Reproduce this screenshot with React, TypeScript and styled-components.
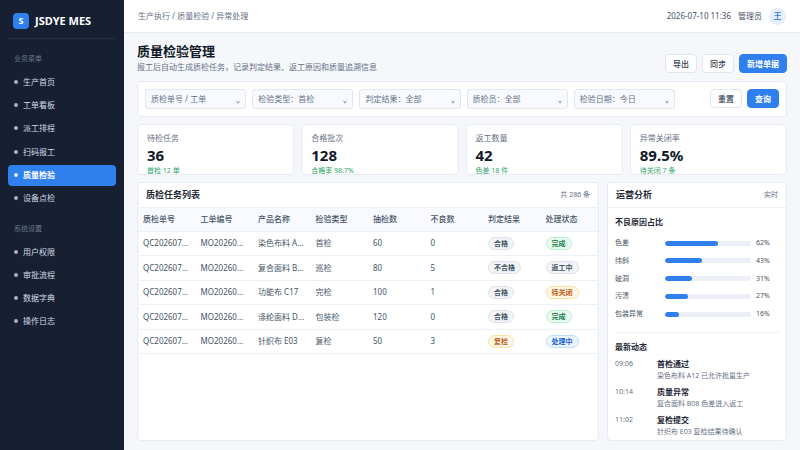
import React from "react";
import styled, { createGlobalStyle, css } from "styled-components";

const color = {
  primary: "#2f80ed",
  ink: "#111827",
  heading: "#1f2937",
  text: "#475467",
  muted: "#667085",
  line: "#e6ebf4",
  soft: "#edf1f7",
  field: "#f8faff",
  page: "#f5f7fb",
  side: "#172033",
  green: "#2aa566",
};

const GlobalStyle = createGlobalStyle`
  *, *::before, *::after { box-sizing: border-box; }
  html, body { margin: 0; padding: 0; }
  body {
    font-family: "Noto Sans", "Noto Sans CJK SC", sans-serif;
    font-size: 8px;
    line-height: 12px;
    color: ${color.text};
    background: ${color.page};
  }
  button, select { font: inherit; color: inherit; margin: 0; }
  h1, h2, h3, p, ul, ol, dl, dd { margin: 0; padding: 0; }
  ul, ol { list-style: none; }
`;

const Shell = styled.div`
  display: flex;
  min-height: 100vh;
`;

const Sidebar = styled.aside`
  flex: 0 0 124px;
  padding: 0 8px;
  background: ${color.side};
`;

const Brand = styled.div`
  display: flex;
  align-items: center;
  gap: 6px;
  height: 39px;
  padding: 3px 5px 0;
  border-bottom: 1px solid #252e42;
  color: #fff;
  font-size: 11px;
  font-weight: 700;
`;

const BrandMark = styled.span`
  display: grid;
  place-items: center;
  width: 16px;
  height: 16px;
  border-radius: 4px;
  background: ${color.primary};
  font-size: 9px;
`;

const NavTitle = styled.h2`
  padding: 14px 6px 6px;
  font-size: 7px;
  font-weight: 400;
  color: #6b768b;
`;

const NavList = styled.ul<{ $height: number }>`
  display: grid;
  align-content: space-between;
  min-height: ${(p) => p.$height}px;
`;

const NavLink = styled.a<{ $active?: boolean }>`
  display: flex;
  align-items: center;
  gap: 5px;
  height: 21px;
  padding: 0 6px;
  border-radius: 4px;
  color: #d3dae6;
  text-decoration: none;
  &::before {
    content: "";
    width: 4px;
    height: 4px;
    border-radius: 50%;
    background: #a9b2c2;
  }
  ${(p) =>
    p.$active &&
    css`
      background: ${color.primary};
      color: #fff;
      font-weight: 700;
      &::before { background: #dbe9fd; }
    `}
`;

const Main = styled.div`
  flex: 1;
  min-width: 0;
  display: flex;
  flex-direction: column;
`;

const TopBar = styled.header`
  display: flex;
  align-items: center;
  justify-content: space-between;
  height: 33px;
  padding: 0 14px;
  background: #fff;
  border-bottom: 1px solid ${color.line};
  color: ${color.muted};
`;

const UserArea = styled.div`
  display: flex;
  align-items: center;
  gap: 7px;
  color: ${color.text};
`;

const Avatar = styled.span`
  display: grid;
  place-items: center;
  width: 17px;
  height: 17px;
  border-radius: 50%;
  background: #e5eefc;
  color: #2b73d6;
  font-weight: 500;
`;

const Content = styled.main`
  flex: 1;
  display: flex;
  flex-direction: column;
  gap: 7px;
  padding: 10px 13px 9px;
`;

const PageHead = styled.div`
  display: flex;
  align-items: flex-end;
  justify-content: space-between;
`;

const PageTitle = styled.h1`
  font-size: 13px;
  line-height: 17px;
  font-weight: 700;
  color: ${color.ink};
`;

const PageNote = styled.p`
  line-height: 14px;
  color: ${color.muted};
`;

const Actions = styled.div`
  display: flex;
  gap: 5px;
  margin-bottom: 1px;
`;

const Button = styled.button<{ $primary?: boolean }>`
  height: 19px;
  padding: 0 7px;
  border: 1px solid ${(p) => (p.$primary ? color.primary : "#e1e6ef")};
  border-radius: 4px;
  background: ${(p) => (p.$primary ? color.primary : "#fff")};
  color: ${(p) => (p.$primary ? "#fff" : "#344054")};
  font-weight: ${(p) => (p.$primary ? 700 : 500)};
  line-height: 12px;
  white-space: nowrap;
`;

const card = css`
  background: #fff;
  border: 1px solid ${color.line};
  border-radius: 4px;
`;

const FilterBar = styled.form`
  ${card}
  display: flex;
  align-items: flex-start;
  gap: 35px;
  padding: 7px;
`;

const Filters = styled.div`
  flex: 1;
  display: flex;
  gap: 6px;
`;

const SelectBox = styled.label`
  flex: 1;
  min-width: 0;
  display: grid;
  align-items: center;
  > * { grid-area: 1 / 1; }
  > svg {
    justify-self: end;
    margin: 6px 6px 0 0;
    pointer-events: none;
  }
`;

const Select = styled.select`
  appearance: none;
  width: 100%;
  height: 20px;
  padding: 0 14px 0 5px;
  border: 1px solid #e1e6f0;
  border-radius: 3px;
  background: ${color.field};
  color: ${color.muted};
`;

const Stats = styled.div`
  display: grid;
  grid-template-columns: repeat(4, 1fr);
  gap: 7px;
`;

const StatCard = styled.section`
  ${card}
  height: 51px;
  padding: 7px 9px 0;
  overflow: hidden;
`;

const StatLabel = styled.h2`
  font-size: 8px;
  font-weight: 400;
  color: ${color.muted};
`;

const StatValue = styled.p`
  font-size: 15px;
  line-height: 22px;
  font-weight: 700;
  color: ${color.ink};
`;

const StatDelta = styled.p`
  font-size: 7px;
  line-height: 10px;
  color: ${color.green};
`;

const Panels = styled.div`
  flex: 1;
  display: grid;
  grid-template-columns: minmax(0, 1fr) 180px;
  gap: 8px;
`;

const Panel = styled.section`
  ${card}
  overflow: hidden;
`;

const PanelHead = styled.header`
  display: flex;
  align-items: center;
  justify-content: space-between;
  height: 25px;
  padding: 0 8px;
  border-bottom: 1px solid ${color.soft};
  font-size: 7px;
  color: ${color.muted};
`;

const PanelTitle = styled.h2`
  font-size: 9px;
  font-weight: 700;
  color: ${color.heading};
`;

const Table = styled.table`
  width: 100%;
  height: 146px;
  table-layout: fixed;
  border-collapse: collapse;
  th, td {
    padding: 0 6px 0 5px;
    border-bottom: 1px solid ${color.soft};
    text-align: left;
    white-space: nowrap;
    overflow: hidden;
    text-overflow: ellipsis;
  }
  th {
    height: 23px;
    background: ${color.field};
    color: ${color.text};
    font-weight: 500;
  }
  td { height: 24px; }
`;

type Tone = "gray" | "green" | "orange" | "blue";

const tones: Record<Tone, [string, string, string]> = {
  gray: ["#475467", "#f2f4f7", "#dde2ea"],
  green: ["#16804c", "#e9fbf1", "#b9efcf"],
  orange: ["#bf5a12", "#fff8e8", "#fbdf9c"],
  blue: ["#1d63d0", "#ebf5ff", "#bcdcfd"],
};

const Tag = styled.span<{ $tone: Tone }>`
  display: inline-block;
  padding: 0 5px;
  border: 1px solid ${(p) => tones[p.$tone][2]};
  border-radius: 7px;
  background: ${(p) => tones[p.$tone][1]};
  color: ${(p) => tones[p.$tone][0]};
  font-size: 7px;
  line-height: 11px;
  font-weight: 700;
  vertical-align: middle;
`;

const Block = styled.section`
  margin: 0 7px;
  padding: 8px 0 12px;
  & + & {
    border-top: 1px solid ${color.soft};
    padding-bottom: 0;
  }
`;

const BlockTitle = styled.h3`
  font-size: 8px;
  font-weight: 700;
  color: ${color.heading};
`;

const BarList = styled.ul`
  display: grid;
  align-content: space-between;
  min-height: 83px;
  margin-top: 9px;
`;

const BarRow = styled.li`
  display: grid;
  grid-template-columns: 45px 1fr 23px;
  gap: 5px;
  align-items: center;
  font-size: 7px;
`;

const Track = styled.span`
  height: 5px;
  border-radius: 3px;
  background: ${color.soft};
  overflow: hidden;
`;

const Fill = styled.span`
  display: block;
  height: 100%;
  border-radius: 3px;
  background: ${color.primary};
`;

const Feed = styled.ol`
  display: grid;
  gap: 5px;
  margin-top: 5px;
`;

const FeedItem = styled.li`
  display: grid;
  grid-template-columns: 38px 1fr;
  gap: 4px;
  font-size: 7px;
  color: ${color.muted};
`;

const FeedTitle = styled.h4`
  margin: 0;
  font-size: 8px;
  font-weight: 700;
  color: ${color.heading};
`;

const FeedNote = styled.p`
  line-height: 11px;
`;

const menus = [
  { title: "业务菜单", height: 138, items: ["生产首页", "工单看板", "派工排程", "扫码报工", "质量检验", "设备点检"] },
  { title: "系统设置", height: 91, items: ["用户权限", "审批流程", "数据字典", "操作日志"] },
];

const filters = ["质检单号 / 工单", "检验类型：首检", "判定结果：全部", "质检员：全部", "检验日期：今日"];

const stats = [
  ["待检任务", "36", "首检 12 单"],
  ["合格批次", "128", "合格率 98.7%"],
  ["返工数量", "42", "色差 18 件"],
  ["异常关闭率", "89.5%", "待关闭 7 条"],
];

const columns = ["质检单号", "工单编号", "产品名称", "检验类型", "抽检数", "不良数", "判定结果", "处理状态"];

type Row = { cells: string[]; result: [string, Tone]; status: [string, Tone] };

const rows: Row[] = [
  { cells: ["QC20260710001", "MO20260710001", "染色布料 A12", "首检", "60", "0"], result: ["合格", "gray"], status: ["完成", "green"] },
  { cells: ["QC20260710002", "MO20260710002", "复合面料 B08", "巡检", "80", "5"], result: ["不合格", "gray"], status: ["返工中", "gray"] },
  { cells: ["QC20260710003", "MO20260710003", "功能布 C17", "完检", "100", "1"], result: ["合格", "gray"], status: ["待关闭", "orange"] },
  { cells: ["QC20260710004", "MO20260710004", "涤纶面料 D21", "包装检", "120", "0"], result: ["合格", "gray"], status: ["完成", "green"] },
  { cells: ["QC20260710005", "MO20260710005", "针织布 E03", "复检", "50", "3"], result: ["复检", "orange"], status: ["处理中", "blue"] },
];

const reasons: [string, number][] = [["色差", 62], ["纬斜", 43], ["破洞", 31], ["污渍", 27], ["包装异常", 16]];

const events = [
  ["09:06", "首检通过", "染色布料 A12 已允许批量生产"],
  ["10:14", "质量异常", "复合面料 B08 色差进入返工"],
  ["11:02", "复检提交", "针织布 E03 复检结果待确认"],
];

export default function App() {
  return (
    <Shell lang="zh-CN">
      <GlobalStyle />
      <Sidebar>
        <Brand>
          <BrandMark>S</BrandMark>
          JSDYE MES
        </Brand>
        {menus.map((menu) => (
          <nav key={menu.title} aria-label={menu.title}>
            <NavTitle>{menu.title}</NavTitle>
            <NavList $height={menu.height}>
              {menu.items.map((item) => (
                <li key={item}>
                  <NavLink href="#" $active={item === "质量检验"}>{item}</NavLink>
                </li>
              ))}
            </NavList>
          </nav>
        ))}
      </Sidebar>
      <Main>
        <TopBar>
          <span>生产执行 / 质量检验 / 异常处理</span>
          <UserArea>
            <span>2026-07-10 11:36</span>
            <span>管理员</span>
            <Avatar>王</Avatar>
          </UserArea>
        </TopBar>
        <Content>
          <PageHead>
            <div>
              <PageTitle>质量检验管理</PageTitle>
              <PageNote>报工后自动生成质检任务，记录判定结果、返工原因和质量追溯信息</PageNote>
            </div>
            <Actions>
              <Button type="button">导出</Button>
              <Button type="button">同步</Button>
              <Button type="button" $primary>新增单据</Button>
            </Actions>
          </PageHead>
          <FilterBar onSubmit={(e) => e.preventDefault()}>
            <Filters>
              {filters.map((name) => (
                <SelectBox key={name}>
                  <Select aria-label={name.split("：")[0]}>
                    <option>{name}</option>
                  </Select>
                  <svg width="4" height="4" viewBox="0 0 4 4" aria-hidden="true">
                    <path d="M0.6 0.8 L2 3.2 L3.4 0.8" fill="none" stroke="#7b869a" strokeWidth="0.8" />
                  </svg>
                </SelectBox>
              ))}
            </Filters>
            <Actions>
              <Button type="reset">重置</Button>
              <Button type="submit" $primary>查询</Button>
            </Actions>
          </FilterBar>
          <Stats>
            {stats.map(([label, value, delta]) => (
              <StatCard key={label}>
                <StatLabel>{label}</StatLabel>
                <StatValue>{value}</StatValue>
                <StatDelta>{delta}</StatDelta>
              </StatCard>
            ))}
          </Stats>
          <Panels>
            <Panel>
              <PanelHead>
                <PanelTitle>质检任务列表</PanelTitle>
                <span>共 286 条</span>
              </PanelHead>
              <Table>
                <thead>
                  <tr>{columns.map((name) => <th key={name} scope="col">{name}</th>)}</tr>
                </thead>
                <tbody>
                  {rows.map((row) => (
                    <tr key={row.cells[0]}>
                      {row.cells.map((cell, i) => <td key={i}>{cell}</td>)}
                      <td><Tag $tone={row.result[1]}>{row.result[0]}</Tag></td>
                      <td><Tag $tone={row.status[1]}>{row.status[0]}</Tag></td>
                    </tr>
                  ))}
                </tbody>
              </Table>
            </Panel>
            <Panel>
              <PanelHead>
                <PanelTitle>运营分析</PanelTitle>
                <span>实时</span>
              </PanelHead>
              <Block>
                <BlockTitle>不良原因占比</BlockTitle>
                <BarList>
                  {reasons.map(([name, share]) => (
                    <BarRow key={name}>
                      <span>{name}</span>
                      <Track><Fill style={{ width: `${share}%` }} /></Track>
                      <span>{share}%</span>
                    </BarRow>
                  ))}
                </BarList>
              </Block>
              <Block>
                <BlockTitle>最新动态</BlockTitle>
                <Feed>
                  {events.map(([time, title, note]) => (
                    <FeedItem key={time}>
                      <time>{time}</time>
                      <div>
                        <FeedTitle>{title}</FeedTitle>
                        <FeedNote>{note}</FeedNote>
                      </div>
                    </FeedItem>
                  ))}
                </Feed>
              </Block>
            </Panel>
          </Panels>
        </Content>
      </Main>
    </Shell>
  );
}
